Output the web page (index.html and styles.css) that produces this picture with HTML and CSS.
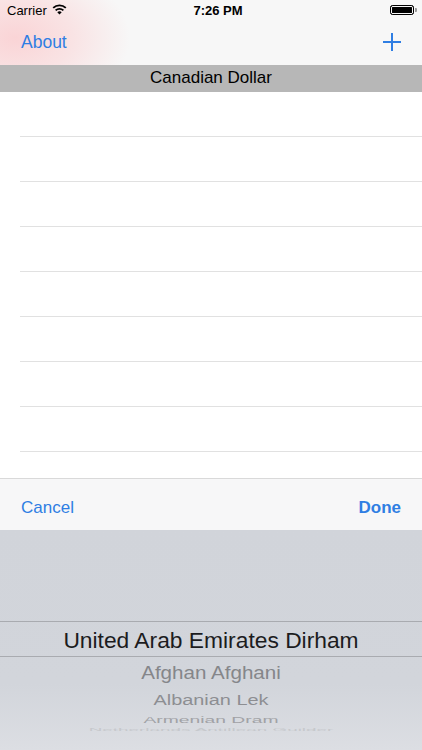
FILE: index.html
```html
<!DOCTYPE html>
<html lang="en">
<head>
  <meta charset="UTF-8" />
  <meta name="viewport" content="width=device-width, initial-scale=1.0"/>
  <title>Currencies</title>
  <link rel="stylesheet" href="styles.css">
</head>
<body>
  <div class="screen">
    <header class="topbar">
      <div class="status">
        <div class="status-left">
          <span>Carrier</span>
          <svg class="wifi" width="15" height="11" viewBox="0 0 15 11">
            <path d="M7.5 10.6 L5.3 8.2 A3.2 3.2 0 0 1 9.7 8.2 Z" fill="#000"/>
            <path d="M3.6 6.4 A5.6 5.6 0 0 1 11.4 6.4" stroke="#000" stroke-width="1.8" fill="none"/>
            <path d="M1.2 3.9 A9 9 0 0 1 13.8 3.9" stroke="#000" stroke-width="1.8" fill="none"/>
          </svg>
        </div>
        <span class="time">7:26 PM</span>
        <div class="battery"><div class="battery-fill"></div></div>
      </div>
      <nav class="navbar">
        <span class="nav-link">About</span>
        <svg class="plus" width="20" height="20" viewBox="0 0 20 20">
          <path d="M10 1 V19 M1 10 H19" stroke="#2f7ee3" stroke-width="2"/>
        </svg>
      </nav>
    </header>

    <div class="section-title">Canadian Dollar</div>

    <ul class="rows">
      <li></li><li></li><li></li><li></li><li></li><li></li><li></li><li></li>
    </ul>

    <div class="toolbar">
      <span class="tool-btn">Cancel</span>
      <span class="tool-btn done">Done</span>
    </div>

    <div class="picker">
      <div class="picker-top"></div>
      <div class="picker-selected">United Arab Emirates Dirham</div>
      <div class="picker-item item-1"><span>Afghan Afghani</span></div>
      <div class="picker-item item-2"><span>Albanian Lek</span></div>
      <div class="picker-item item-3"><span>Armenian Dram</span></div>
      <div class="picker-item item-4"><span>Netherlands Antillean Guilder</span></div>
    </div>
  </div>
</body>
</html>
```

FILE: styles.css
```css
body { margin: 0; font-family: "Liberation Sans", Arial, sans-serif; background: #fff; }
.screen { width: 422px; height: 750px; overflow: hidden; display: flex; flex-direction: column; }

.topbar { height: 65px; background: radial-gradient(ellipse 115px 75px at 15px 38px, #fad4d6 0%, #f9e3e4 50%, #f7f7f7 100%); }
.status { height: 20px; display: flex; align-items: center; justify-content: space-between; padding: 0 5px 0 7px; font-size: 13px; color: #000; }
.status-left { display: flex; align-items: center; gap: 5px; width: 120px; }
.wifi { margin-top: -1px; }
.time { font-weight: bold; margin-left: 12px; }
.battery { width: 120px; display: flex; justify-content: flex-end; position: relative; }
.battery-fill { width: 22px; height: 8px; background: #000; border: 1px solid #000; border-radius: 2.5px; box-shadow: inset 0 0 0 1px #f7f7f7; margin-right: 3px; }
.battery::after { content: ""; position: absolute; right: 0; top: 3px; width: 2px; height: 4px; background: #999; border-radius: 0 1px 1px 0; }

.navbar { height: 45px; display: flex; align-items: center; justify-content: space-between; padding: 0 20px 0 21px; }
.nav-link { font-size: 17.5px; color: #2f7ee3; }
.plus { margin-top: -1px; }

.section-title { height: 27px; background: #b7b7b7; text-align: center; font-size: 17px; line-height: 25px; color: #000; }

.rows { list-style: none; margin: 0; padding: 0 0 0 20px; flex: 1; }
.rows li { height: 44px; border-bottom: 1px solid #e1e1e1; }

.toolbar { height: 51px; background: #f7f7f8; border-top: 1px solid #d9d9d9; display: flex; align-items: center; justify-content: space-between; padding: 0 21px; }
.tool-btn { font-size: 17px; color: #2f7ee3; margin-top: 7px; }
.done { font-weight: bold; }

.picker { height: 220px; background: linear-gradient(#d1d4da, #d2d5db 70%, #dcdee3); display: flex; flex-direction: column; text-align: center; }
.picker-top { height: 91px; }
.picker-selected { height: 34px; border-top: 1px solid #a9abb0; border-bottom: 1px solid #a9abb0; font-size: 22.8px; line-height: 36px; color: #1c1c1e; }
.picker-item { overflow: visible; white-space: nowrap; }
.picker-item span { display: inline-block; }
.item-1 { height: 31px; line-height: 32px; font-size: 20.6px; color: #85868a; }
.item-1 span { transform: scaleY(0.9); }
.item-2 { height: 23px; line-height: 25px; font-size: 19.9px; color: #8d8e92; }
.item-2 span { transform: scaleY(0.72); }
.item-3 { height: 15px; line-height: 17px; font-size: 19.3px; color: #a1a2a6; }
.item-3 span { transform: scaleY(0.5); }
.item-4 { height: 8px; line-height: 8px; font-size: 18.9px; color: #c6c8cc; }
.item-4 span { transform: scaleY(0.22); }
```
